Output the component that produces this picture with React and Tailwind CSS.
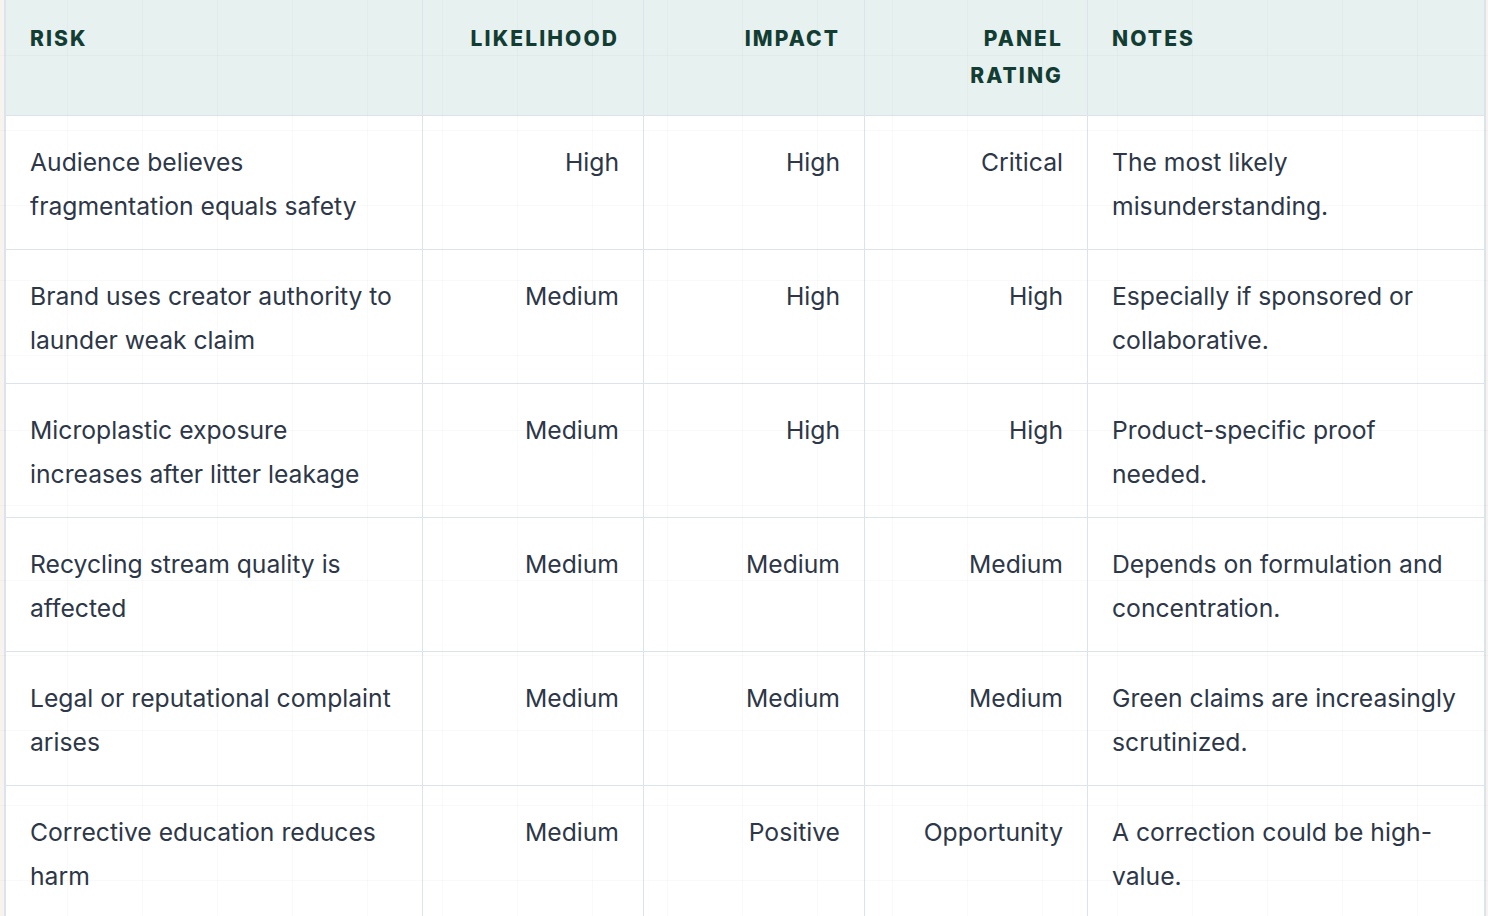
const rows = [
  ['Audience believes fragmentation equals safety', 'High', 'High', 'Critical', 'The most likely misunderstanding.'],
  ['Brand uses creator authority to launder weak claim', 'Medium', 'High', 'High', 'Especially if sponsored or collaborative.'],
  ['Microplastic exposure increases after litter leakage', 'Medium', 'High', 'High', 'Product-specific proof needed.'],
  ['Recycling stream quality is affected', 'Medium', 'Medium', 'Medium', 'Depends on formulation and concentration.'],
  ['Legal or reputational complaint arises', 'Medium', 'Medium', 'Medium', 'Green claims are increasingly scrutinized.'],
  ['Corrective education reduces harm', 'Medium', 'Positive', 'Opportunity', 'A correction could be high-value.'],
];

const headers = [
  { label: 'Risk', align: 'text-left' },
  { label: 'Likelihood', align: 'text-right' },
  { label: 'Impact', align: 'text-right' },
  { label: <>Panel<br />Rating</>, align: 'text-right' },
  { label: 'Notes', align: 'text-left' },
];

export default function App() {
  return (
    <div className="relative h-[916px] overflow-hidden bg-[#f7f3ef] pl-[4px] font-['Inter','Liberation_Sans',sans-serif]">
      <div className="grid w-[1486px] grid-cols-[417px_221px_221px_223px_398px] border-l-2 border-[#dde3ec]">
        {headers.map((h, i) => (
          <div
            key={i}
            className={`border-b border-r border-[#dde3ec] bg-[#e7f1ef] px-6 pt-[20px] pb-[21px] text-[21px] font-extrabold uppercase leading-[37px] tracking-[0.1em] text-[#133d33] ${h.align} ${i === 4 ? 'border-r-2' : ''}`}
          >
            {h.label}
          </div>
        ))}
        {rows.map((row, r) =>
          row.map((cell, c) => (
            <div
              key={r + '-' + c}
              className={`border-b border-r border-[#dde3ec] bg-white px-6 pt-[24px] pb-[21px] text-[24.7px] leading-[44px] text-[#2d3748] ${c >= 1 && c <= 3 ? 'text-right' : 'text-left'} ${c === 4 ? 'border-r-2' : ''}`}
            >
              {cell}
            </div>
          ))
        )}
      </div>
      {/* faint grid paper overlay */}
      <div className="pointer-events-none absolute inset-0 bg-[linear-gradient(to_right,rgba(15,23,42,0.022)_1px,transparent_1px),linear-gradient(to_bottom,rgba(15,23,42,0.022)_1px,transparent_1px)] bg-[size:75px_75px] bg-[position:67px_55px]" />
    </div>
  );
}
